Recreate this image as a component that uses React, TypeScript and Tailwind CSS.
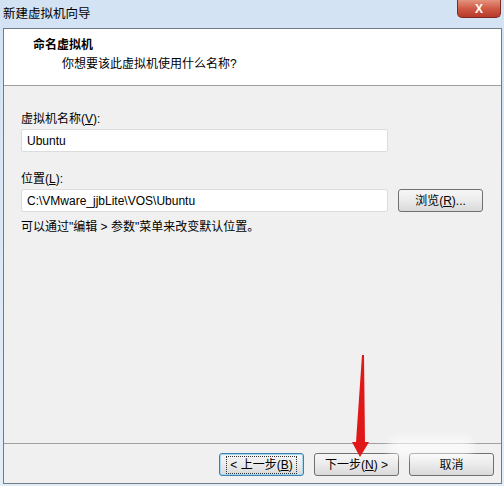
import React from 'react';

const FONT = '"Liberation Sans", "Noto Sans CJK SC", sans-serif';

const Btn: React.FC<{ children: React.ReactNode; focused?: boolean }> = ({ children, focused }) => (
  <div
    className={`w-[85px] h-[23px] rounded-[3px] border flex items-center justify-center text-[12px] leading-none text-black bg-gradient-to-b from-[#f6f6f6] via-[#ebebeb] to-[#d9d9d9] ${
      focused ? 'border-[#3c7fb1] shadow-[inset_0_0_0_1px_#a8d8f0]' : 'border-[#707070]'
    }`}
  >
    <span className={focused ? 'px-[3px] py-[2px] outline outline-1 outline-dotted outline-[#333]' : ''}>
      {children}
    </span>
  </div>
);

export default function App() {
  return (
    <div className="relative w-[504px] h-[486px] bg-gradient-to-b from-[#d3e3f4] to-[#e2edf8] flex flex-col overflow-hidden" style={{ fontFamily: FONT }}>
      {/* title bar */}
      <div className="h-[28px] flex items-center pl-[3px] text-[12.5px] text-black">新建虚拟机向导</div>
      <div className="absolute right-[3px] top-0 w-[44px] h-[18px] rounded-b-[5px] border border-t-0 border-[#7e2a22] bg-gradient-to-b from-[#e4937f] via-[#cf5a45] to-[#b8382a] flex items-center justify-center">
        <span className="text-white font-bold text-[12px] leading-none">X</span>
      </div>

      {/* window frame */}
      <div className="ml-[3px] mr-[2px] h-[456px] border border-[#6f7c88] flex flex-col">
        {/* header */}
        <div className="h-[57px] bg-white border-b border-[#a0a0a0] pt-[8px] text-[12px] leading-[16px] text-black">
          <div className="pl-[29px] font-bold">命名虚拟机</div>
          <div className="pl-[58px] mt-[3px]">你想要该此虚拟机使用什么名称?</div>
        </div>

        {/* body */}
        <div className="flex-1 bg-[#f0f0f0] pl-[17px] pt-[25px] text-[12px] leading-[16px] text-black">
          <div>
            虚拟机名称(<span className="underline">V</span>):
          </div>
          <div className="mt-[2px] w-[367px] h-[23px] bg-white border border-[#dcdcdc] rounded-[2px] flex items-center pl-[5px]">Ubuntu</div>
          <div className="mt-[19px]">
            位置(<span className="underline">L</span>):
          </div>
          <div className="mt-[2px] flex items-center">
            <div className="w-[367px] h-[23px] bg-white border border-[#dcdcdc] rounded-[2px] flex items-center pl-[5px]">
              C:\VMware_jjbLite\VOS\Ubuntu
            </div>
            <div className="ml-[10px]">
              <Btn>
                浏览(<span className="underline">R</span>)...
              </Btn>
            </div>
          </div>
          <div className="mt-[7px]">可以通过"编辑 &gt; 参数"菜单来改变默认位置。</div>
        </div>

        {/* footer */}
        <div className="h-[40px] bg-[#f0f0f0] border-t border-[#a0a0a0] flex justify-end items-start pt-[9px] pr-[7px] gap-[10px]">
          <Btn focused>
            &lt; 上一步(<span className="underline">B</span>)
          </Btn>
          <Btn>
            下一步(<span className="underline">N</span>) &gt;
          </Btn>
          <Btn>取消</Btn>
        </div>
      </div>

      {/* watermark smudge */}
      <div className="absolute left-[388px] top-[437px] w-[86px] h-[20px] rounded-full bg-white/60 blur-[4px]" />

      {/* red annotation arrow */}
      <svg className="absolute left-[340px] top-[350px]" width="40" height="112" viewBox="0 0 40 112">
        <path d="M22 5 L24 5 L25 92 L29 92 L20 107 L12 92 L16 92 Z" fill="#e01818" />
      </svg>
    </div>
  );
}
